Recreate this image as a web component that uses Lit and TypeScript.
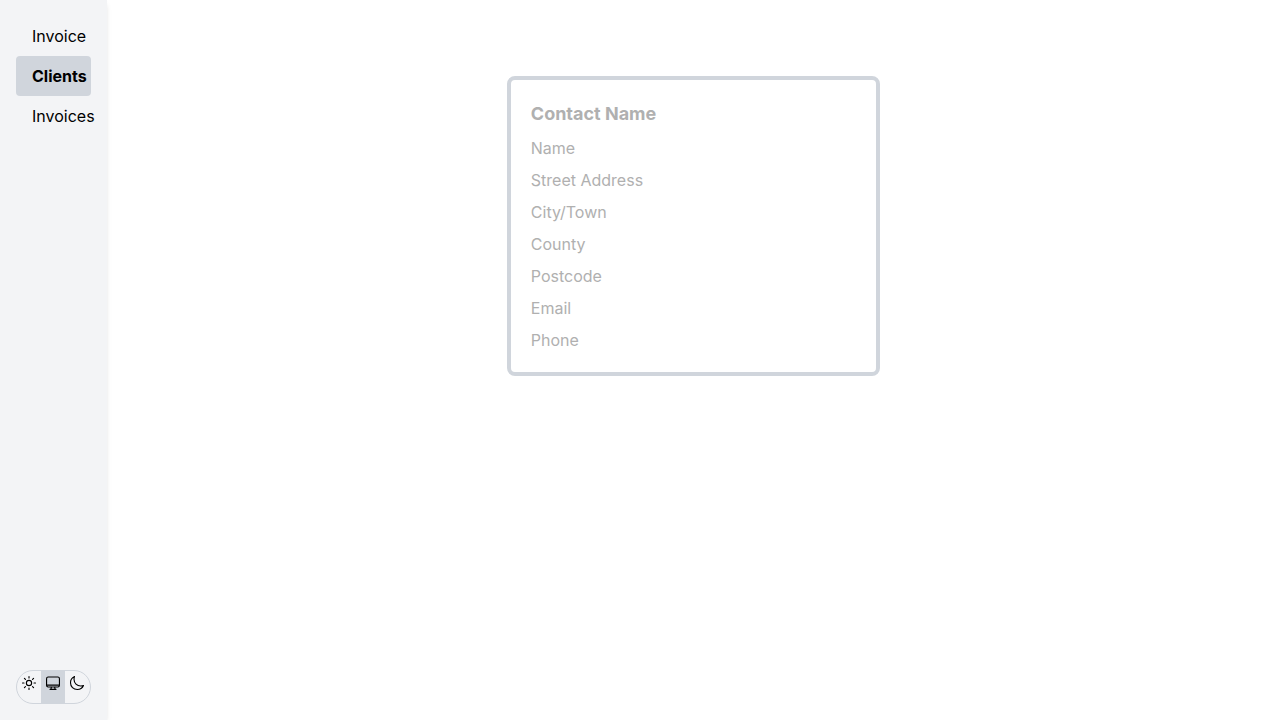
import { LitElement, html, css, svg } from "lit";
import { customElement, state } from "lit/decorators.js";
import { classMap } from "lit/directives/class-map.js";

const links = [
  { id: "invoice", label: "Invoice" },
  { id: "clients", label: "Clients" },
  { id: "invoices", label: "Invoices" },
];

const fields = [
  { id: "name", label: "Name", type: "text" },
  { id: "street", label: "Street Address", type: "text" },
  { id: "city", label: "City/Town", type: "text" },
  { id: "county", label: "County", type: "text" },
  { id: "postcode", label: "Postcode", type: "text" },
  { id: "email", label: "Email", type: "email" },
  { id: "phone", label: "Phone", type: "tel" },
];

const themes = [
  {
    id: "light",
    label: "Light theme",
    icon: svg`<path class="round" d="M256 48v48M256 416v48M403.08 108.92l-33.94 33.94M142.86 369.14l-33.94 33.94M464 256h-48M96 256H48M403.08 403.08l-33.94-33.94M142.86 142.86l-33.94-33.94"/><circle cx="256" cy="256" r="84"/>`,
  },
  {
    id: "system",
    label: "System theme",
    icon: svg`<rect x="50" y="64" width="412" height="318" rx="52"/><path d="M50 322h412M204 382l-14 76M308 382l14 76"/><path class="round" d="M160 458h192"/>`,
  },
  {
    id: "dark",
    label: "Dark theme",
    icon: svg`<path d="M160 136c0-30.62 4.51-61.61 16-88C99.57 81.27 48 159.32 48 248c0 119.29 96.71 216 216 216 88.68 0 166.73-51.57 200-128-26.39 11.49-57.38 16-88 16-119.29 0-216-96.71-216-216z"/>`,
  },
];

@customElement("theme-switch")
class ThemeSwitch extends LitElement {
  @state() private theme = "system";

  static styles = css`
    :host {
      display: block;
    }
    .group {
      display: flex;
      margin: 0;
      padding: 0;
      min-width: 0;
      border: 1px solid #d0d5dc;
      border-radius: 9999px;
      overflow: hidden;
    }
    .option {
      flex: 1;
      height: 24px;
      padding: 4px;
      cursor: pointer;
    }
    .selected {
      background: #d0d5dc;
    }
    .option:focus-within {
      outline: 2px solid #6b7280;
      outline-offset: -2px;
    }
    .radio {
      appearance: none;
      display: block;
      width: 0;
      height: 0;
      margin: 0;
      outline: none;
    }
    .icon {
      display: block;
      width: 16px;
      height: 16px;
      fill: none;
      stroke: #000;
      stroke-width: 36;
      stroke-linejoin: round;
    }
    .round {
      stroke-linecap: round;
    }
  `;

  render() {
    return html`<fieldset class="group" aria-label="Theme">
      ${themes.map(
        (t) => html`<label class=${classMap({ option: true, selected: t.id === this.theme })}>
          <input
            class="radio"
            type="radio"
            name="theme"
            aria-label=${t.label}
            .checked=${t.id === this.theme}
            @change=${() => (this.theme = t.id)}
          />
          <svg class="icon" viewBox="0 0 512 512" aria-hidden="true">${t.icon}</svg>
        </label>`
      )}
    </fieldset>`;
  }
}

@customElement("client-card")
class ClientCard extends LitElement {
  static styles = css`
    :host {
      display: block;
    }
    .card {
      display: flex;
      flex-direction: column;
      gap: 8px;
      padding: 20px;
      border: 4px solid #d0d5dc;
      border-radius: 8px;
    }
    .field {
      box-sizing: border-box;
      width: 100%;
      height: 24px;
      margin: 0;
      padding: 0;
      border: 0;
      outline: none;
      background: transparent;
      color: #000;
      font: 400 16px/24px Inter, sans-serif;
    }
    .title {
      height: 28px;
      font-size: 18px;
      line-height: 28px;
      font-weight: 700;
    }
    .field::placeholder {
      color: #b0b0b0;
      opacity: 1;
    }
  `;

  render() {
    return html`<form class="card">
      <input class="field title" type="text" name="contact" aria-label="Contact Name" placeholder="Contact Name" />
      ${fields.map(
        (f) => html`<input class="field" type=${f.type} name=${f.id} aria-label=${f.label} placeholder=${f.label} />`
      )}
    </form>`;
  }
}

@customElement("app-root")
class AppRoot extends LitElement {
  @state() private page = "clients";

  static styles = css`
    :host {
      display: grid;
      grid-template-columns: minmax(0, 1fr) minmax(0, 11fr);
      min-height: 100vh;
      background: #fff;
      color: #000;
      font: 400 16px/24px Inter, sans-serif;
    }
    .sidebar {
      display: flex;
      flex-direction: column;
      justify-content: space-between;
      padding: 16px;
      background: #f3f4f6;
      box-shadow: 0 4px 6px -1px rgba(0, 0, 0, 0.1), 0 2px 4px -2px rgba(0, 0, 0, 0.1);
    }
    .nav {
      display: flex;
      flex-direction: column;
    }
    .link {
      padding: 8px 16px;
      border-radius: 4px;
      color: inherit;
      text-decoration: none;
      white-space: nowrap;
    }
    .active {
      background: #d0d5dc;
      font-weight: 700;
    }
    .main {
      display: flex;
      flex-direction: column;
      align-items: center;
      padding: 76px 16px 16px;
    }
    .client {
      width: 100%;
      max-width: 373px;
    }
  `;

  render() {
    return html`
      <aside class="sidebar">
        <nav class="nav">
          ${links.map(
            (l) => html`<a
              class=${classMap({ link: true, active: l.id === this.page })}
              href="#${l.id}"
              @click=${() => (this.page = l.id)}
              >${l.label}</a
            >`
          )}
        </nav>
        <theme-switch></theme-switch>
      </aside>
      <main class="main">
        <client-card class="client"></client-card>
      </main>
    `;
  }
}
